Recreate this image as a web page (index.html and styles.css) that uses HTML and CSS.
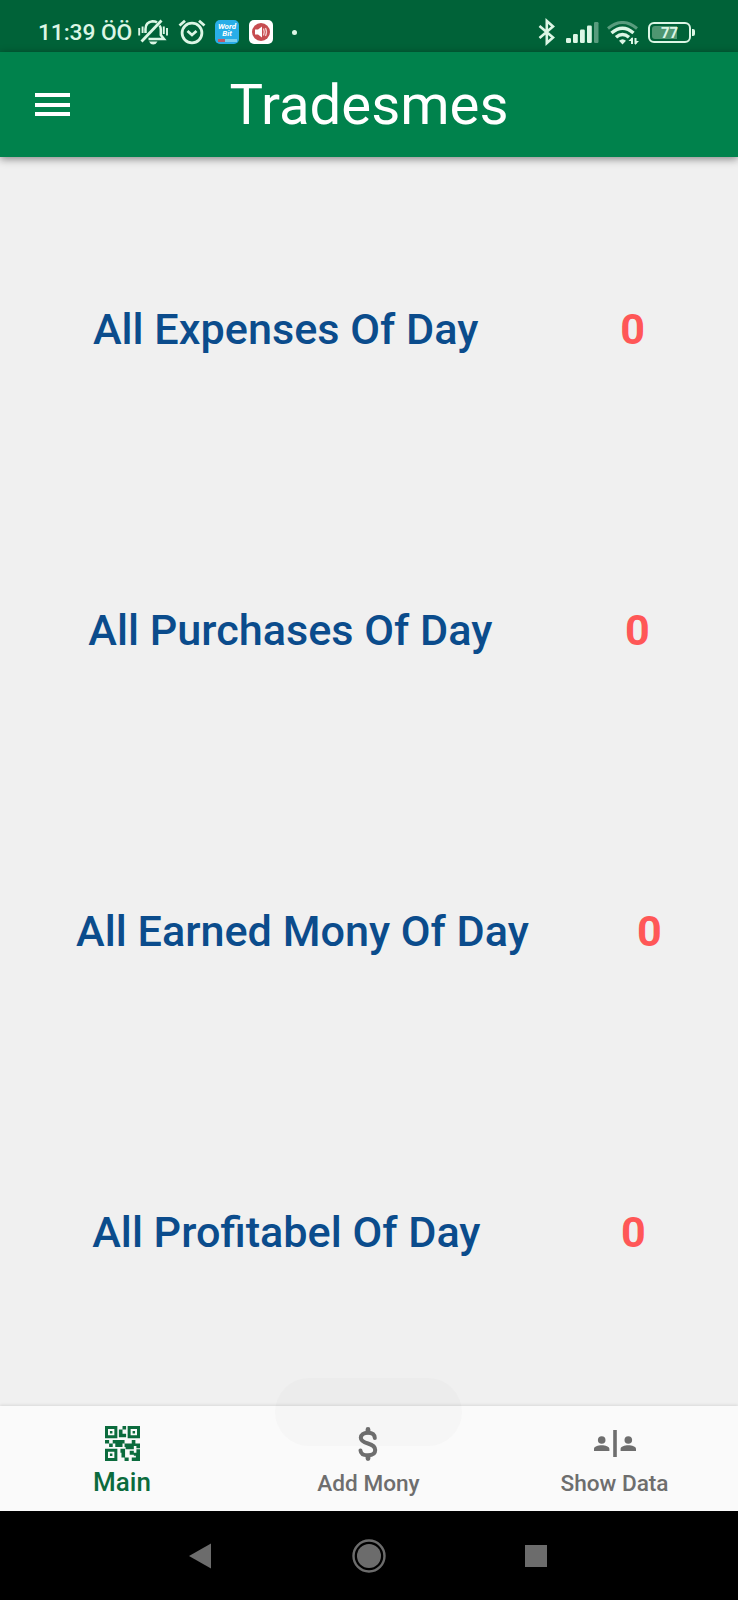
FILE: index.html
```html
<!DOCTYPE html>
<html lang="en">
<head>
<meta charset="utf-8">
<title>Tradesmes</title>
<link rel="stylesheet" href="styles.css">
</head>
<body>
<div class="screen">
  <header class="status">
    <span class="clock">11:39 ÖÖ</span>
    <svg class="s-bell" width="30" height="26" viewBox="0 0 30 26" fill="none" stroke="#dcf6e5" stroke-width="2.500">
      <path d="M10.500 20H26L22.800 16V10.500Q22.800 8 21.500 6.500M19 3.400Q17 2.200 14.500 2.200Q7.500 3 7.500 10V14"/>
      <path d="M3.500 22.500L23.500 1.500" stroke-width="2.800"/>
      <path d="M1.200 9V16.500M4.600 7.500V14M25.800 7.500V15M29 9V16.500" stroke-width="1.900"/>
      <path d="M11 22.500H19.500Q18 25.500 15.200 25.500T11 22.500Z" fill="#dcf6e5" stroke="none"/>
    </svg>
    <svg class="s-alarm" width="28" height="26" viewBox="0 0 28 26" fill="none" stroke="#dcf6e5" stroke-width="2.800">
      <circle cx="14" cy="14" r="9.900"/>
      <path d="M9.500 12L14 16L18.500 12M1.500 6.500L7 1.700M26.500 6.500L21 1.700"/>
    </svg>
    <span class="wordbit"><b>Word</b><b>Bit</b><i></i></span>
    <svg class="s-sound" width="24" height="24" viewBox="0 0 24 24">
      <rect width="24" height="24" rx="5" fill="#fff"/>
      <circle cx="12" cy="12" r="9" fill="#c64c50"/>
      <path d="M6 9.500H9L13 6.500V17.500L9 14.500H6Z" fill="#fff"/>
      <path d="M14.500 8.500Q16 12 14.500 15.500M16.500 8Q18.500 12 16.500 16" fill="none" stroke="#f3cccc" stroke-width="1.300"/>
    </svg>
    <span class="dot"></span>
    <div class="status-right">
      <svg width="17" height="28" viewBox="0 0 17 28" fill="none" stroke="#dcf6e5" stroke-width="2.600">
        <path d="M1.500 8L15 19.500L8.800 25V3L15 8.500L1.500 20"/>
      </svg>
      <svg class="s-signal" width="33" height="21" viewBox="0 0 33 21" fill="#dcf6e5">
        <rect y="16" width="5" height="5" rx="1.200"/><rect x="7" y="12" width="4.800" height="9" rx="1.200"/><rect x="14" y="7.500" width="4.800" height="13.500" rx="1.200"/><rect x="21" y="3.500" width="4.800" height="17.500" rx="1.200"/><rect x="28" width="4.500" height="21" rx="1.200" opacity=".4"/>
      </svg>
      <svg class="s-wifi" width="32" height="24" viewBox="0 0 32 24" fill="none" stroke="#dcf6e5" stroke-width="3">
        <path d="M1 7.500Q15.500-4.500 30 7.500" opacity=".4"/>
        <path d="M4.500 12Q15.500 2.500 26.500 12M9 16.300Q15.500 10.500 22 16.300" stroke-width="3.400"/>
        <path d="M12 19.800Q15.500 16.500 19 19.800L15.500 23.500Z" fill="#dcf6e5" stroke="none"/>
        <path d="M25 23V17M28.500 17V23" stroke-width="2"/><path d="M21.500 20L25.500 16V20ZM32 20L28 24V20Z" fill="#dcf6e5" stroke="none"/>
      </svg>
      <span class="battery"><span>77</span></span>
    </div>
  </header>
  <div class="appbar">
    <div class="burger"><i></i><i></i><i></i></div>
    <h1>Tradesmes</h1>
  </div>
  <main>
    <div class="row"><span class="label">All Expenses Of Day</span><span class="num">0</span></div>
    <div class="row"><span class="label">All Purchases Of Day</span><span class="num">0</span></div>
    <div class="row"><span class="label">All Earned Mony Of Day</span><span class="num">0</span></div>
    <div class="row"><span class="label">All Profitabel Of Day</span><span class="num">0</span></div>
  </main>
  <nav class="tabs">
    <div class="tab active">
      <svg width="35" height="35" viewBox="0 0 34 34" fill="#0b6b3d">
        <path fill-rule="evenodd" d="M0 0H12V12H0ZM2.900 2.900V9.100H9.100V2.900ZM4.800 4.800H7.200V7.200H4.800ZM22 0H34V12H22ZM24.900 2.900V9.100H31.100V2.900ZM26.800 4.800H29.200V7.200H26.800ZM0 22H12V34H0ZM2.900 24.900V31.100H9.100V24.900ZM4.800 26.800H7.200V29.200H4.800Z"/>
        <path d="M17 0H20.500V3.500H17ZM13.500 3.500H17V7.500H20.500V11H13.500ZM0 13.500H4V17H0ZM4 17H7.500V20.500H4ZM7.500 13.500H19V17H17V20.500H10V17H7.500ZM19 17H26V13.500H29.500V17H34V21.500H30.500V19.500H28V22.500H20V20.500H19ZM15 22H19.500V30.500H16V26H15ZM24 24H28V28H24ZM28 26H30.500V22.500H34V34H26V30.500H30V29H28ZM19 30.500H23V34H19Z"/>
      </svg>
      <span>Main</span>
    </div>
    <div class="tab">
      <svg class="dollar" width="20" height="34" viewBox="0 0 20 34" fill="none" stroke="#6e6e6e" stroke-width="4" stroke-linecap="round">
        <path d="M16.800 11Q16.500 5.800 10 5.800T2.800 10.800Q2.800 14.500 10 16.500T17.200 23Q17.200 28.300 10 28.300T2.500 23.500"/>
        <path d="M10 2.500V5M10 29.500V31.500" stroke-width="4.800"/>
      </svg>
      <span>Add Mony</span>
    </div>
    <div class="tab">
      <svg width="42" height="28" viewBox="0 0 42 28" fill="#6e6e6e">
        <rect x="19.200" y="0" width="3.600" height="27"/>
        <circle cx="7.700" cy="10" r="3.800"/><circle cx="34.300" cy="10" r="3.800"/>
        <path d="M0 21V19C0 16.500 4 15.300 7.700 15.300S15.400 16.500 15.400 19V21ZM26.600 21V19C26.600 16.500 30.600 15.300 34.300 15.300S42 16.500 42 19V21Z"/>
      </svg>
      <span>Show Data</span>
    </div>
  </nav>
  <div class="toast"></div>
  <footer class="sysnav">
    <svg width="23" height="26" viewBox="0 0 23 26" fill="#6c6c6c"><path d="M0 13L22 .5V25.500Z"/></svg>
    <svg width="34" height="34" viewBox="0 0 34 34"><circle cx="17" cy="17" r="15.500" fill="none" stroke="#6c6c6c" stroke-width="2.400"/><circle cx="17" cy="17" r="12" fill="#6c6c6c"/></svg>
    <svg width="22" height="22" viewBox="0 0 22 22"><rect width="22" height="22" fill="#6c6c6c"/></svg>
  </footer>
</div>
</body>
</html>
```
FILE: styles.css
```css
* { box-sizing: border-box; }
body { margin: 0; font-family: Roboto, "Liberation Sans", sans-serif; }
.screen { position: relative; width: 738px; height: 1600px; display: flex; flex-direction: column; background: #f0f0f0; overflow: hidden; }
svg { display: block; flex: none; }
.status { height: 52px; background: #006238; display: flex; align-items: center; padding: 12px 43px 0 38px; color: #dcf6e5; }
.clock { font-size: 22.8px; font-weight: 500; width: 100px; white-space: nowrap; line-height: 28px; letter-spacing: -.1px; padding-top: 2px; }
.s-alarm { margin-left: 10px; }
.wordbit { margin-left: 9px; width: 24px; height: 24px; border-radius: 5px; background: #29aee8; color: #fff; display: flex; flex-direction: column; align-items: center; padding-top: 3px; font-size: 8px; line-height: 7px; font-style: italic; overflow: hidden; }
.wordbit i { width: 19px; height: 3px; margin-top: 2px; background: linear-gradient(90deg, #c05a68 35%, #7cd0ee 35%); }
.s-sound { margin-left: 10px; }
.dot { width: 5px; height: 5px; border-radius: 50%; background: #dcf6e5; margin-left: 19px; }
.status-right { margin-left: auto; display: flex; align-items: center; }
.s-signal { margin: 1px 0 0 11px; }
.s-wifi { margin: 2px 0 0 8px; }
.battery { position: relative; margin-left: 9px; margin-right: 4px; width: 43px; height: 21px; border: 2.5px solid #dcf6e5; border-radius: 6px; padding: 2px; }
.battery::after { content: ""; position: absolute; right: -6px; top: 5px; width: 3px; height: 7px; background: #dcf6e5; border-radius: 0 2px 2px 0; }
.battery span { display: block; height: 13px; border-radius: 3px; background: linear-gradient(90deg, #4f9671 70%, transparent 70%); font-size: 15px; font-weight: 700; line-height: 14px; text-align: center; }
.appbar { position: relative; z-index: 1; height: 105px; background: #00824c; display: grid; grid-template-columns: 100px 1fr 100px; align-items: center; box-shadow: 0 2px 8px rgba(0,0,0,.45); }
.burger { margin-left: 35px; width: 35px; display: grid; gap: 5.5px; }
.burger i { height: 4px; background: #fff; }
h1 { margin: 0; color: #fff; font-size: 56.3px; font-weight: 400; text-align: center; line-height: 68px; white-space: nowrap; }
main { height: 1249px; padding: 22px 22px 23px; display: flex; flex-direction: column; }
.row { flex: 1; display: flex; justify-content: space-around; align-items: center; font-size: 43.2px; white-space: nowrap; }
.label { color: #0b4c8c; font-weight: 500; }
.num { color: #ff5757; font-weight: 700; }
.tabs { height: 105px; background: #fafafa; box-shadow: 0 -1px 3px rgba(0,0,0,.1); display: grid; grid-template-columns: repeat(3, 1fr); color: #6e6e6e; }
.tab { display: grid; grid-template-rows: 40px 38px; padding-top: 18px; padding-right: 1px; align-content: start; justify-items: center; align-items: center; font-size: 22.6px; font-weight: 500; }
.active { grid-template-rows: 39px 37px; color: #0b6b3d; font-size: 26px; padding-right: 2px; }
.tab .dollar { margin-right: 1px; }
.toast { position: absolute; left: 275px; top: 1378px; width: 187px; height: 68px; border-radius: 34px; background: rgba(90,90,90,.022); }
.sysnav { height: 89px; background: #000; display: flex; align-items: center; justify-content: space-between; padding: 0 191px 0 189px; }
```
